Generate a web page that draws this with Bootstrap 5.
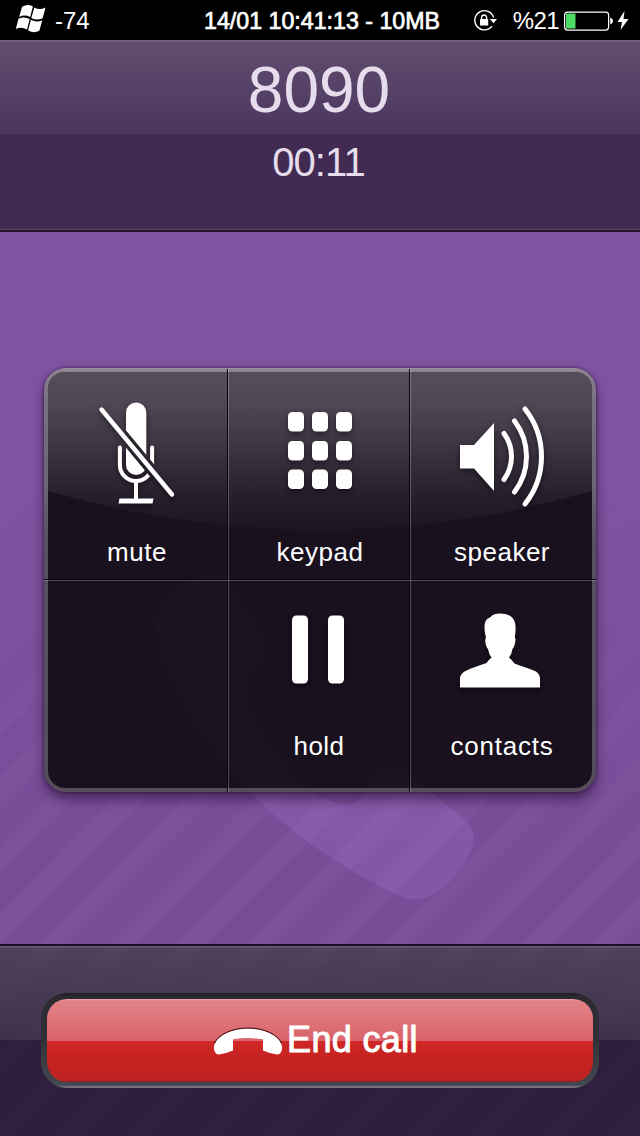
<!DOCTYPE html>
<html lang="en">
<head>
<meta charset="utf-8">
<meta name="viewport" content="width=device-width, initial-scale=1">
<title>Call in progress</title>
<link href="https://cdn.jsdelivr.net/npm/bootstrap@5.3.0/dist/css/bootstrap.min.css" rel="stylesheet">
<style>
  body { font-family: "Liberation Sans", Arial, sans-serif; background: #000; }
  .stage {
    width: 640px; height: 1136px;
    background:
      linear-gradient(180deg, #8052a0 0, #8052a0 480px, rgba(128,82,160,0) 860px),
      repeating-linear-gradient(135deg, #784c97 0, #784c97 11.5px, #7c519b 12.5px, #7c519b 32px, #784c97 33px, #784c97 48.8px);
  }
  .statusbar { height: 40px; background: #000; font-size: 24px; line-height: 40px; padding: 1px 11px 0 15px; }
  .status-side { width: 180px; }
  .clock { font-size: 23.2px; -webkit-text-stroke: .7px #fff; }
  .caller {
    height: 192px; color: #e6dcec; border-bottom: 2px solid #23152e;
    background: linear-gradient(180deg, #75637f 0, #75637f 1px, #624d6f 2px, #4b355f 94px, #412b53 94px, #412a52 188px, #594566 190px);
  }
  .caller-number { font-size: 64px; line-height: 72px; padding: 14px 2px 0 0; }
  .caller-time { font-size: 40px; line-height: 44px; padding: 14px 3px 0 0; letter-spacing: -.9px; }
  .panel {
    width: 552px; height: 424px; margin: 136px 44px 0; border-radius: 22px;
    background: linear-gradient(180deg, #968e9c 0, #898190 4px, #79717f 30px, #6d6573 120px, #5a505f 170px, #564d5a 100%);
    box-shadow: 0 0 3px rgba(25,8,40,.7), 0 7px 12px rgba(25,8,40,.55);
  }
  .panel-face { inset: 0; width: 552px; height: 424px; }
  .keys { display: grid; grid-template-columns: 184px 182px 182px; grid-template-rows: 212px 212px; }
  .key { font-size: 26px; line-height: 30px; color: #fff; }
  .key span { padding-left: 2px; letter-spacing: .5px; }
  .key svg { filter: drop-shadow(0 3px 3px rgba(0,0,0,.5)); }
  .key-top { padding-top: 26px; }
  .key-top svg { margin-bottom: 27px; }
  .key-low { padding-top: 20px; }
  .key-low svg { margin-bottom: 31px; }
  .callbar {
    height: 192px; border-top: 2px solid #190f20; padding: 47px 41px 0;
    background: linear-gradient(180deg, rgba(98,96,100,.68) 0, rgba(98,96,100,.68) 1px, rgba(60,60,62,.68) 2px, rgba(37,34,40,.68) 94px, rgba(12,7,17,.68) 94px);
    background-clip: padding-box;
  }
  .end-rim {
    height: 95px; padding: 6px; border-radius: 26px;
    background: linear-gradient(180deg, #201f26 0, #2a2a30 4px, #313238 50%, #434850 92px, #777383 94px, #777383 100%);
  }
  .btn-end, .btn-end:hover {
    height: 83px; border: 0; border-radius: 20px; padding: 0 9px 2px 0; color: #fff; font-size: 36px; line-height: 42px;
    background: linear-gradient(180deg, #efa3a6 0, #e28287 2px, #d9636a 42px, #cf2827 42px, #c62220 58px, #bf2321 81px, #8d1d20 83px);
    letter-spacing: .35px; -webkit-text-stroke: 1px #fff;
  }
</style>
</head>
<body>
<div class="stage d-flex flex-column position-relative overflow-hidden">

  <div class="statusbar d-flex justify-content-between text-white">
    <div class="status-side d-flex align-items-center">
      <svg class="mb-1" width="32" height="30" viewBox="15.500 5.500 32 30" fill="#fff">
        <path d="M22.6 8.2Q28 5 33.4 8L30.7 18.5Q25 15.8 19.6 18.4Z"/>
        <path d="M34.8 9Q40 12 46 9L43.2 19.8Q37 22.5 31.8 19.6Z"/>
        <path d="M19 20.3Q24.8 17.6 30.2 20.6L27.5 31Q22 27.8 16.3 30.4Z"/>
        <path d="M31.4 21.3Q37 24.4 42.8 21.7L39.8 32.3Q34 35.2 28.6 31.8Z"/>
      </svg>
      <span class="ps-2">-74</span>
    </div>
    <div class="clock text-nowrap">14/01 10:41:13 - 10MB</div>
    <div class="status-side d-flex align-items-center justify-content-end">
      <svg class="me-3" width="24" height="24" viewBox="474 8.500 24 24" fill="none" stroke="#fff">
        <path d="M494.6 17A9.6 9.6 0 1 0 493 25.6" stroke-width="1.4"/>
        <path d="M490.8 18.6H498L494.5 22.8Z" fill="#fff" stroke="none"/>
        <rect x="481" y="18.6" width="8.2" height="6.4" rx=".6" fill="#fff" stroke="none"/>
        <path d="M482.6 19V17A2.5 2.5 0 0 1 487.6 17V19" stroke-width="1.4"/>
      </svg>
      <span style="letter-spacing:-.6px">%21</span>
      <svg class="ms-1" width="66" height="24" viewBox="563 8.500 66 24" fill="#fff">
        <rect x="564.600" y="11.600" width="44" height="18" rx="3" fill="none" stroke="#fff" stroke-width="1.200"/>
        <rect x="566" y="13" width="9.500" height="15" fill="#4cd964"/>
        <path d="M610.200 17Q613 18 613 20.500Q613 23 610.200 24Z"/>
        <path d="M624.500 10.500L617.500 21.500H622L620.500 29.500L628.500 18.500H623.500Z"/>
      </svg>
    </div>
  </div>

  <header class="caller text-center">
    <div class="caller-number">8090</div>
    <div class="caller-time">00:11</div>
  </header>

  <!-- faded handset behind the key panel -->
  <svg class="position-absolute top-0 start-0" width="640" height="940" viewBox="0 0 640 940" fill="#c090ea" fill-opacity=".17">
    <path id="handset" d="M212 573C182 582 154 598 155 622C160 680 205 745 250 792C295 838 352 874 402 897Q416 903 430 896C450 886 472 858 474 840Q475 829 466 821L431 792L400 768Q385 760 376 774L364 792Q355 807 344 805Q332 804 313 792C280 765 252 725 246 695Q244 680 262 664Q272 655 264 640L232 584Q225 571 212 573Z"/>
  </svg>

  <main class="flex-grow-1">
    <div class="panel position-relative">
      <svg class="panel-face position-absolute" viewBox="0 0 552 424">
        <defs>
          <linearGradient id="gloss" x1="0" y1="0" x2="0" y2="1">
            <stop offset="0" stop-color="#554d5a"/>
            <stop offset=".2" stop-color="#4f4754"/>
            <stop offset=".5" stop-color="#3c3341"/>
            <stop offset=".8" stop-color="#271e2c"/>
            <stop offset="1" stop-color="#1d1523"/>
          </linearGradient>
          <clipPath id="face"><rect x="4" y="4" width="544" height="416" rx="17"/></clipPath>
        </defs>
        <g clip-path="url(#face)">
          <rect width="552" height="424" fill="#1a111f"/>
          <use href="#handset" transform="translate(-44 -368)" fill="#fff" fill-opacity=".012"/>
          <path d="M4 4H548V123Q276 201 4 123Z" fill="url(#gloss)"/>
        </g>
        <path d="M183.500 1V424M365.500 1V424M0 211.500H552" stroke="#08040b" fill="none"/>
        <path d="M184.500 1V424M366.500 1V424M0 212.500H552" stroke="#fff" stroke-opacity=".25" fill="none"/>
      </svg>

      <div class="keys position-relative">
        <div class="key key-top d-flex flex-column align-items-center">
          <svg width="100" height="116" viewBox="86 394 100 116" fill="none" stroke="#fff">
            <mask id="cut" maskUnits="userSpaceOnUse" x="86" y="394" width="100" height="116">
              <rect x="86" y="394" width="100" height="116" fill="#fff" stroke="none"/>
              <path d="M101.500 409.500L172 494.500" stroke="#000" stroke-width="11"/>
            </mask>
            <g mask="url(#cut)">
              <rect x="126" y="402.500" width="20.300" height="72.500" rx="10.100" fill="#fff" stroke="none"/>
              <path d="M119.900 447.500V465A16.100 16.100 0 0 0 152.100 465V447.500" stroke-width="4" stroke-linecap="round"/>
            </g>
            <path d="M136 482V500" stroke-width="4"/>
            <path d="M119.500 498.500H153.500L152.500 503.500H118.500Z" fill="#fff" stroke="none"/>
            <path d="M101.500 409.500L172 494.500" stroke-width="4.400" stroke-linecap="round"/>
          </svg>
          <span>mute</span>
        </div>
        <div class="key key-top d-flex flex-column align-items-center">
          <svg width="100" height="116" viewBox="269 394 100 116" fill="#fff">
            <rect x="288" y="412" width="16" height="19.500" rx="4.500"/><rect x="312" y="412" width="16" height="19.500" rx="4.500"/><rect x="336" y="412" width="16" height="19.500" rx="4.500"/>
            <rect x="288" y="441" width="16" height="19.500" rx="4.500"/><rect x="312" y="441" width="16" height="19.500" rx="4.500"/><rect x="336" y="441" width="16" height="19.500" rx="4.500"/>
            <rect x="288" y="469.500" width="16" height="19.500" rx="4.500"/><rect x="312" y="469.500" width="16" height="19.500" rx="4.500"/><rect x="336" y="469.500" width="16" height="19.500" rx="4.500"/>
          </svg>
          <span>keypad</span>
        </div>
        <div class="key key-top d-flex flex-column align-items-center">
          <svg width="100" height="116" viewBox="451 394 100 116" fill="none" stroke="#fff" stroke-width="5" stroke-linecap="round">
            <path d="M460 445H474L494 423V491L474 468.500H460Z" fill="#fff" stroke="none"/>
            <path d="M504 433.500A39 39 0 0 1 504 479.500M514.500 421A58.500 58.500 0 0 1 514.500 492M525 409A76.600 76.600 0 0 1 525 504"/>
          </svg>
          <span>speaker</span>
        </div>
        <div class="key key-low"></div>
        <div class="key key-low d-flex flex-column align-items-center">
          <svg width="100" height="100" viewBox="269 600 100 100" fill="#fff">
            <rect x="292" y="615.500" width="16" height="68" rx="4.500"/><rect x="328" y="615.500" width="16" height="68" rx="4.500"/>
          </svg>
          <span class="ps-0">hold</span>
        </div>
        <div class="key key-low d-flex flex-column align-items-center">
          <svg width="100" height="100" viewBox="451 600 100 100" fill="#fff">
            <path d="M460 687.500V679Q460 674 464.500 671.500C472 667.500 480 665.500 486.500 663Q488.500 660 491.500 657.500Q488.800 654 488 649Q485.500 646.500 485.200 640L486 637Q484.500 633 484.500 626Q485 618.500 490 617.500Q493 613.500 500 613.500Q507 613.500 511 616.500Q515.500 620 515.500 627Q515.800 632 514.800 637L515.500 639.500Q515 646.500 512.500 649Q511.800 654 509 657.500Q512 660 514.500 663.500C521 666 529 668.500 536 671.500Q540 674 540 679V687.500Z"/>
          </svg>
          <span style="letter-spacing:.8px">contacts</span>
        </div>
      </div>
    </div>
  </main>

  <footer class="callbar">
    <div class="end-rim">
      <button type="button" class="btn btn-end w-100 d-flex align-items-center justify-content-center">
        <svg class="me-1" width="70" height="30" viewBox="213 1024.500 70 30">
          <path d="M214 1046C215 1036.500 231 1028 248 1028S281 1036.500 282 1046Q282.500 1050.500 280 1053Q279 1054.300 276 1053.800Q269 1052.800 263 1050V1038.800Q248 1036.300 233 1038.800V1050Q227 1052.800 220 1053.800Q217 1054.300 216 1053Q213.500 1050.500 214 1046Z" fill="#fff"/>
          <path d="M214.500 1043C218 1034 232 1027.500 248 1027.500S278 1034 281.500 1043" fill="none" stroke="#35090c"/>
        </svg>
        <span>End call</span>
      </button>
    </div>
  </footer>
</div>
<script src="https://cdn.jsdelivr.net/npm/bootstrap@5.3.0/dist/js/bootstrap.bundle.min.js"></script>
</body>
</html>
